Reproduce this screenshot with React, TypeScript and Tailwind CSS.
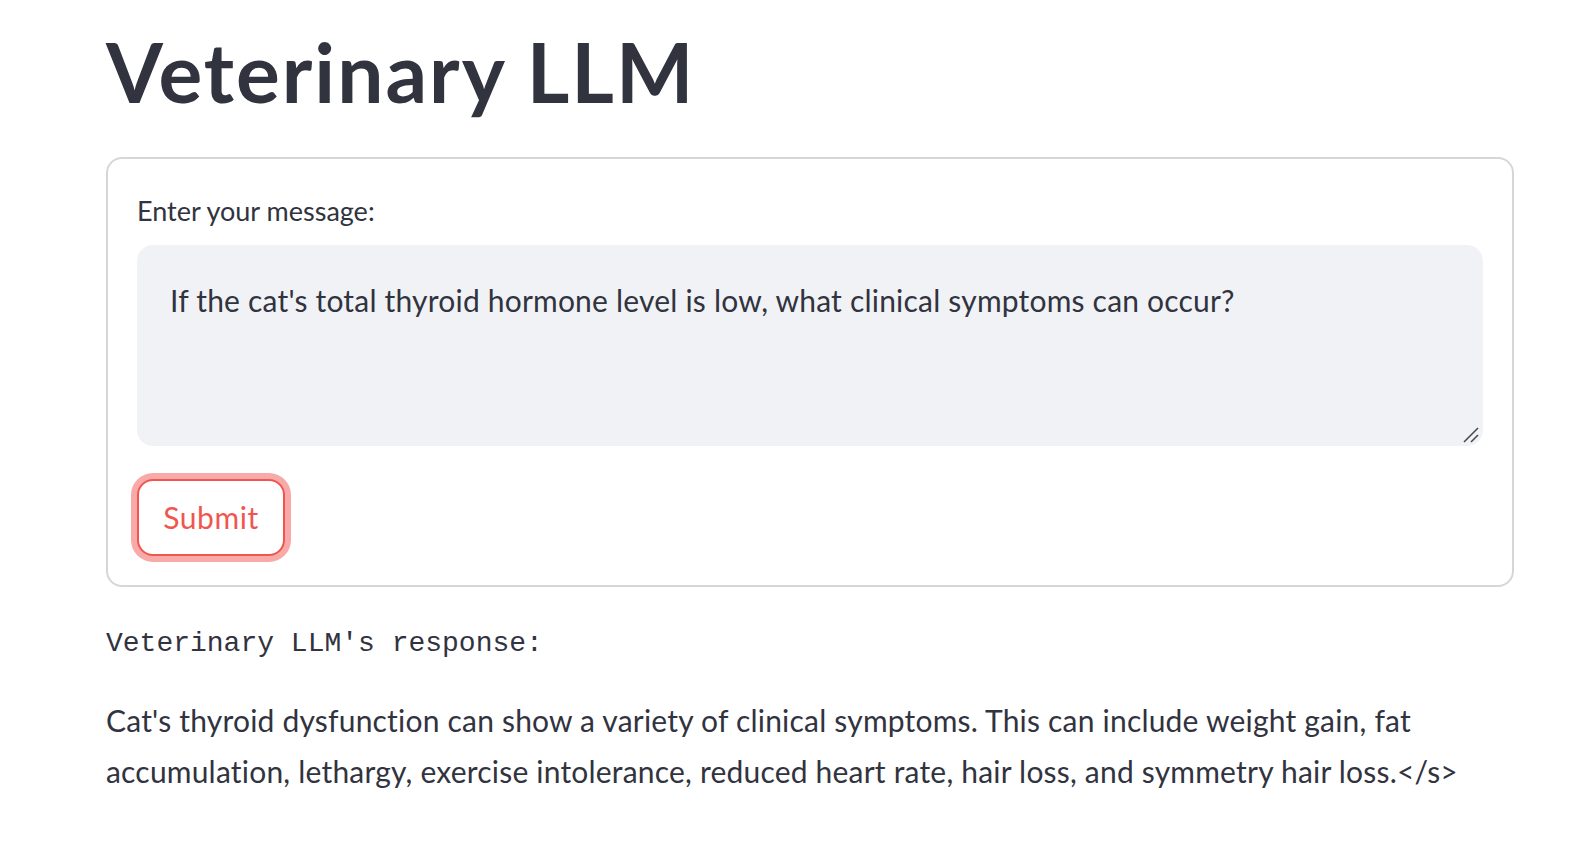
import { useState } from 'react';

export default function App() {
  const [message, setMessage] = useState(
    "If the cat's total thyroid hormone level is low, what clinical symptoms can occur?"
  );

  return (
    <div className="min-h-screen bg-white text-[#31333f] font-['Lato','Noto_Sans',sans-serif]">
      <div className="ml-[106px] w-[1408px] pt-[23px]">
        {/* Title */}
        <h1 className="text-[82px] leading-[96px] font-bold tracking-[2px]">Veterinary LLM</h1>

        {/* Form */}
        <form
          onSubmit={(e) => e.preventDefault()}
          className="mt-[38px] border-2 border-[#d6d6d9] rounded-[16px] px-[29px] pt-[34px] pb-[29px]"
        >
          <label className="block text-[27px] leading-[36px]">Enter your message:</label>
          <div className="relative mt-[16px]">
            <textarea
              value={message}
              onChange={(e) => setMessage(e.target.value)}
              className="block w-full h-[201px] resize-none rounded-[16px] bg-[#f0f2f6] pl-[33px] pr-[33px] pt-[32px] text-[30px] leading-[46px] tracking-[0.2px] text-[#31333f] outline-none"
            />
            {/* resize grip */}
            <svg
              className="absolute right-[3px] bottom-[2px] pointer-events-none"
              width="18"
              height="18"
              viewBox="0 0 18 18"
            >
              <path d="M2 16 L16 2" stroke="#4a4a4a" strokeWidth="1.6" />
              <path d="M9 16 L16 9" stroke="#4a4a4a" strokeWidth="1.6" />
            </svg>
          </div>
          <button
            type="submit"
            className="mt-[33px] block w-[148px] h-[77px] rounded-[16px] border-2 border-[#f0564f] bg-white text-[30px] tracking-[0.6px] text-[#f0564f] shadow-[0_0_0_6px_rgba(240,86,79,0.5)]"
          >
            Submit
          </button>
        </form>

        {/* Response */}
        <div className="mt-[34px] font-['Liberation_Mono',monospace] text-[28px] leading-[45px]">
          Veterinary LLM's response:
        </div>
        <p className="mt-[29px] text-[30px] leading-[51px] tracking-[0.2px]">
          Cat's thyroid dysfunction can show a variety of clinical symptoms. This can include weight gain, fat
          accumulation, lethargy, exercise intolerance, reduced heart rate, hair loss, and symmetry hair loss.&lt;/s&gt;
        </p>
      </div>
    </div>
  );
}
